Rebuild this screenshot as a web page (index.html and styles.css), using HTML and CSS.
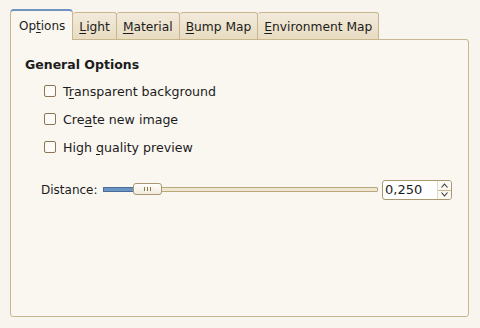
FILE: index.html
```html
<!DOCTYPE html>
<html>
<head>
<meta charset="utf-8">
<link rel="stylesheet" href="styles.css">
</head>
<body>
<div class="wrap">
  <div class="tabs">
    <div class="tab active">Op<u>t</u>ions</div>
    <div class="tab"><u>L</u>ight</div>
    <div class="tab"><u>M</u>aterial</div>
    <div class="tab"><u>B</u>ump Map</div>
    <div class="tab"><u>E</u>nvironment Map</div>
  </div>
  <div class="panel">
    <div class="header">General Options</div>
    <div class="checks">
      <div class="row"><span class="box"></span><span class="lbl">T<u>r</u>ansparent background</span></div>
      <div class="row"><span class="box"></span><span class="lbl">Cre<u>a</u>te new image</span></div>
      <div class="row"><span class="box"></span><span class="lbl">High <u>q</u>uality preview</span></div>
    </div>
    <div class="dist">
      <span class="dlabel">Distance:</span>
      <div class="slider">
        <div class="trough"><div class="fill"></div></div>
        <div class="handle"><span></span><span></span><span></span></div>
      </div>
      <div class="spin">
        <span class="val">0,250</span>
        <div class="btns">
          <div class="btn"><svg width="7" height="5" viewBox="0 0 7 5"><path d="M0.5 4.5 L3.5 1 L6.5 4.5" fill="none" stroke="#333" stroke-width="1.1"/></svg></div>
          <div class="btn bot"><svg width="7" height="5" viewBox="0 0 7 5"><path d="M0.5 0.5 L3.5 4 L6.5 0.5" fill="none" stroke="#333" stroke-width="1.1"/></svg></div>
        </div>
      </div>
    </div>
  </div>
</div>
</body>
</html>
```
FILE: styles.css
```css
html, body {
  margin: 0;
  padding: 0;
  background: #f8f5ee;
  font-family: "DejaVu Sans", sans-serif;
  font-size: 12px;
  color: #1c1c1c;
}
u { text-decoration: underline; text-underline-offset: 2px; }
.wrap {
  padding: 10px 11px 10px 10px;
}
.tabs {
  display: flex;
  align-items: flex-end;
  height: 30px;
  margin-bottom: -1px;
  position: relative;
  z-index: 1;
}
.tab {
  box-sizing: border-box;
  height: 28px;
  padding: 0 6px 0 6px;
  line-height: 28px;
  font-size: 12.25px;
  border: 1px solid #c9b68f;
  border-left: none;
  border-radius: 3px 3px 0 0;
  background: linear-gradient(#f2eadb, #e8dcc1);
  white-space: nowrap;
}
.tab.active {
  height: 31px;
  line-height: 30px;
  font-size: 12px;
  padding: 0 7px 3px 8px;
  border: 1px solid #c9b68f;
  border-top: 2px solid #6f94c2;
  border-bottom: none;
  border-radius: 4px 4px 0 0;
  background: #faf7f1;
}
.panel {
  box-sizing: border-box;
  height: 278px;
  border: 1px solid #c9b68f;
  border-radius: 0 3px 3px 3px;
  background: #faf7f1;
  padding: 17px 16px 0 14px;
}
.header {
  font-weight: bold;
  font-size: 12.5px;
  line-height: 16px;
}
.checks {
  margin-top: 4px;
  padding-left: 19px;
}
.row {
  display: flex;
  align-items: center;
  height: 28px;
  gap: 7px;
}
.lbl {
  font-size: 12.6px;
}
.box {
  box-sizing: border-box;
  width: 12px;
  height: 12px;
  border: 1px solid #8c7755;
  border-radius: 2px;
  background: #fcfbf8;
}
.dist {
  display: flex;
  align-items: center;
  margin-top: 19px;
  padding-left: 16px;
  height: 20px;
}
.dlabel {
  margin-right: 5px;
}
.slider {
  flex: 1;
  position: relative;
  height: 14px;
  margin-right: 4px;
}
.trough {
  position: absolute;
  left: 0;
  right: 0;
  top: 4px;
  height: 5px;
  box-sizing: border-box;
  border: 1px solid #bba77d;
  border-radius: 1px;
  background: #efe6cf;
}
.fill {
  position: absolute;
  left: -1px;
  top: -1px;
  width: 32px;
  height: 5px;
  box-sizing: border-box;
  border: 1px solid #4a6d99;
  background: #6a94c4;
}
.handle {
  position: absolute;
  left: 30px;
  top: 0;
  width: 29px;
  height: 12px;
  box-sizing: border-box;
  border: 1px solid #a9976f;
  border-radius: 3px;
  background: linear-gradient(#fffefb, #f1ebdc);
  display: flex;
  justify-content: center;
  align-items: center;
  gap: 2px;
}
.handle span {
  width: 1px;
  height: 4px;
  background: #8c7650;
}
.spin {
  box-sizing: border-box;
  width: 70px;
  height: 20px;
  border: 1px solid #a9976f;
  border-radius: 3px;
  background: #ffffff;
  display: flex;
}
.val {
  flex: 1;
  padding-left: 2px;
  line-height: 18px;
  font-size: 13px;
}
.btns {
  width: 13px;
  border-left: 1px solid #e3d9c4;
  display: flex;
  flex-direction: column;
  background: #fbf9f4;
  border-radius: 0 2px 2px 0;
}
.btn {
  flex: 1;
  display: flex;
  align-items: center;
  justify-content: center;
}
.btn.bot {
  border-top: 1px solid #c9b68f;
}
```
